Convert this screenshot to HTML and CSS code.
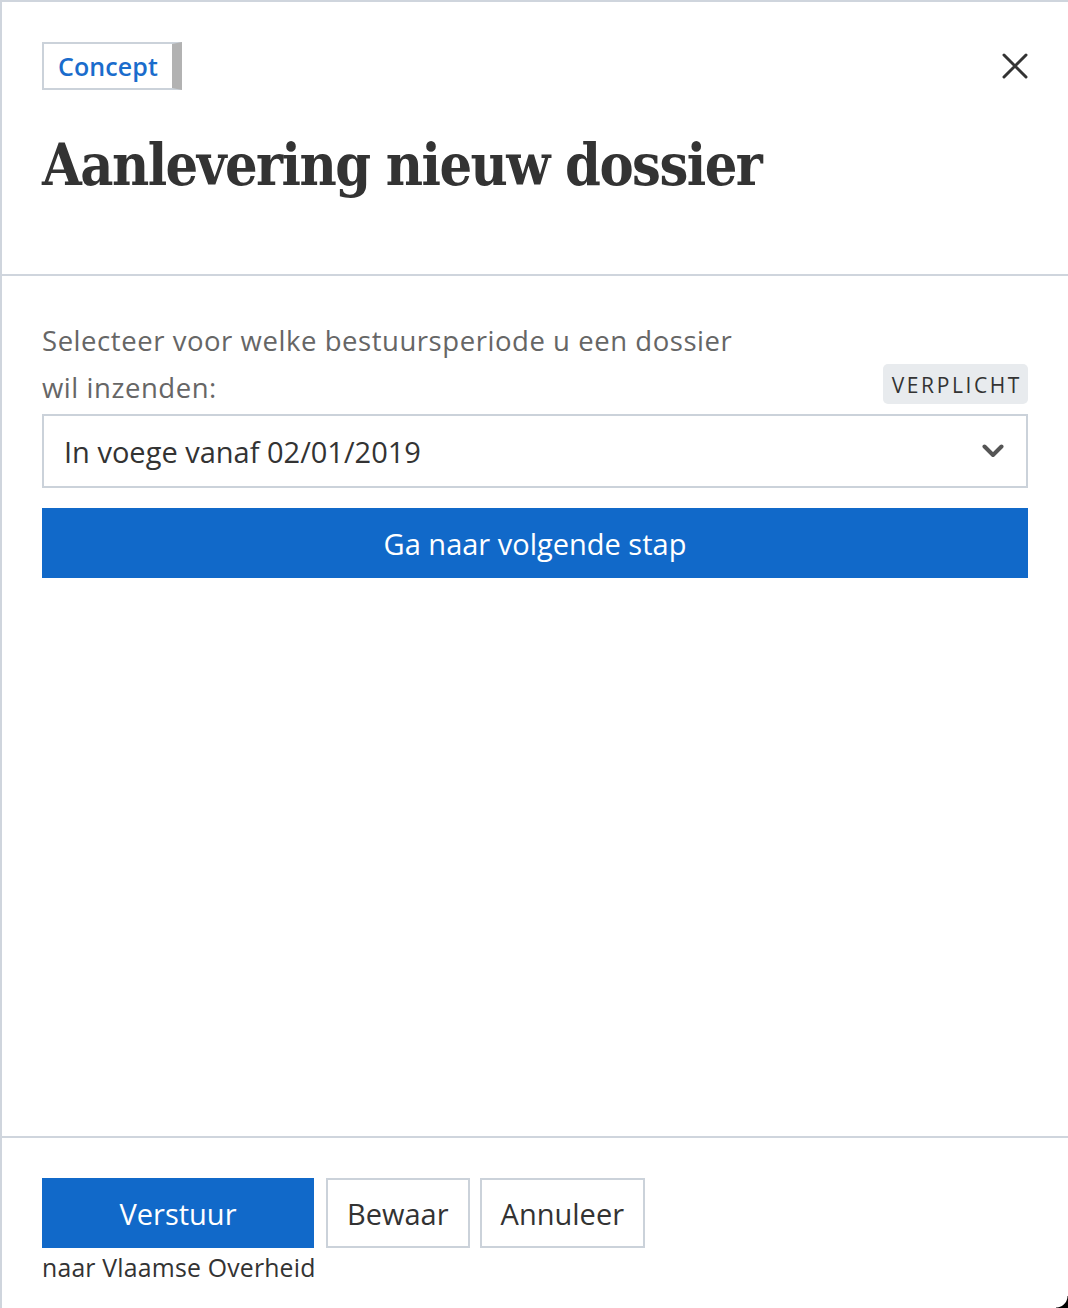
FILE: index.html
```html
<!DOCTYPE html>
<html lang="nl">
<head>
<meta charset="utf-8">
<title>Aanlevering nieuw dossier</title>
<link rel="stylesheet" href="styles.css">
</head>
<body>
<div class="modal">
  <header class="modal-header">
    <div class="header-top">
      <span class="pill">Concept</span>
      <button class="close" aria-label="Sluiten">
        <svg width="26" height="26" viewBox="0 0 26 26"><path d="M2 2 L24 24 M24 2 L2 24" stroke="#333" stroke-width="3" stroke-linecap="round" fill="none"/></svg>
      </button>
    </div>
    <h1 class="title">Aanlevering nieuw dossier</h1>
  </header>
  <main class="modal-body">
    <div class="label-row">
      <label class="label">Selecteer voor welke bestuursperiode u een dossier wil inzenden:</label>
      <span class="badge">VERPLICHT</span>
    </div>
    <div class="select">
      <span>In voege vanaf 02/01/2019</span>
      <svg width="22" height="14" viewBox="0 0 22 14"><path d="M2.5 2.5 L11 11 L19.5 2.5" stroke="#555" stroke-width="4" fill="none" stroke-linecap="round" stroke-linejoin="round"/></svg>
    </div>
    <button class="btn btn-primary btn-wide">Ga naar volgende stap</button>
  </main>
  <footer class="modal-footer">
    <div class="actions">
      <div class="send-group">
        <button class="btn btn-primary btn-send">Verstuur</button>
        <span class="send-note">naar Vlaamse Overheid</span>
      </div>
      <button class="btn btn-secondary">Bewaar</button>
      <button class="btn btn-secondary">Annuleer</button>
    </div>
  </footer>
  <div class="corner"></div>
</div>
</body>
</html>
```
FILE: styles.css
```css
* { box-sizing: border-box; }
html, body { margin: 0; padding: 0; }
body {
  background: #fff;
  font-family: "Open Sans", "Noto Sans", sans-serif;
  color: #333;
}
.modal {
  position: relative;
  width: 1068px;
  height: 1308px;
  border-top: 2px solid #cfd5dd;
  border-left: 2px solid #cfd5dd;
  display: flex;
  flex-direction: column;
  background: #fff;
}
.modal-header {
  padding: 40px 40px 0 40px;
  height: 274px;
  border-bottom: 2px solid #cfd5dd;
}
.header-top {
  display: flex;
  justify-content: space-between;
  align-items: center;
  height: 48px;
}
.pill {
  display: inline-flex;
  align-items: center;
  height: 48px;
  padding: 0 14px 0 14px;
  border: 2px solid #cbd2da;
  border-right: 10px solid #b2b2b2;
  color: #1a6ccc;
  font-size: 25px;
  font-weight: 600;
  letter-spacing: 0.1px;
}
.close {
  background: none;
  border: 0;
  padding: 0;
  width: 26px;
  height: 26px;
  display: flex;
}
.title {
  margin: 42px 0 0 0;
  font-family: "DejaVu Serif Condensed", "DejaVu Serif", serif;
  font-weight: bold;
  font-size: 57px;
  line-height: 66px;
  color: #333;
  letter-spacing: -1.55px;
}
.modal-body {
  flex: 1;
  padding: 41px 40px 0 40px;
}
.label-row {
  display: flex;
  justify-content: space-between;
  align-items: flex-end;
  margin-bottom: 3px;
}
.label {
  width: 720px;
  font-size: 27.5px;
  line-height: 47px;
  letter-spacing: 0.55px;
  color: #666;
  font-weight: 400;
}
.badge {
  background: #e8ebee;
  border-radius: 5px;
  padding: 0 6px 0 9px;
  height: 40px;
  line-height: 42px;
  font-size: 21px;
  letter-spacing: 2.6px;
  color: #333;
  margin-bottom: 7px;
}
.select {
  height: 74px;
  border: 2px solid #cbd2da;
  display: flex;
  align-items: center;
  justify-content: space-between;
  padding: 0 22px 0 20px;
  font-size: 29px;
  color: #333;
}
.btn {
  font-family: inherit;
  font-size: 29px;
  height: 70px;
  border: 0;
  padding: 0;
  cursor: pointer;
}
.btn-primary {
  background: #1169c9;
  color: #fff;
}
.btn-wide {
  width: 100%;
  margin-top: 20px;
  display: block;
}
.modal-footer {
  height: 172px;
  border-top: 2px solid #cfd5dd;
  padding: 40px 40px 0 40px;
}
.actions {
  display: flex;
  gap: 10px;
  align-items: flex-start;
}
.send-group {
  display: flex;
  flex-direction: column;
  width: 272px;
  margin-right: 2px;
}
.btn-send {
  width: 272px;
}
.send-note {
  font-size: 24.8px;
  line-height: 38px;
  color: #333;
  letter-spacing: 0.2px;
  white-space: nowrap;
}
.btn-secondary {
  background: #fff;
  border: 2px solid #cbd2da;
  color: #333;
  padding: 0 19px;
}
.corner {
  position: absolute;
  right: 0;
  bottom: 0;
  width: 12px;
  height: 12px;
  background: radial-gradient(circle at 0 0, transparent 11px, #000 12px);
}
```
